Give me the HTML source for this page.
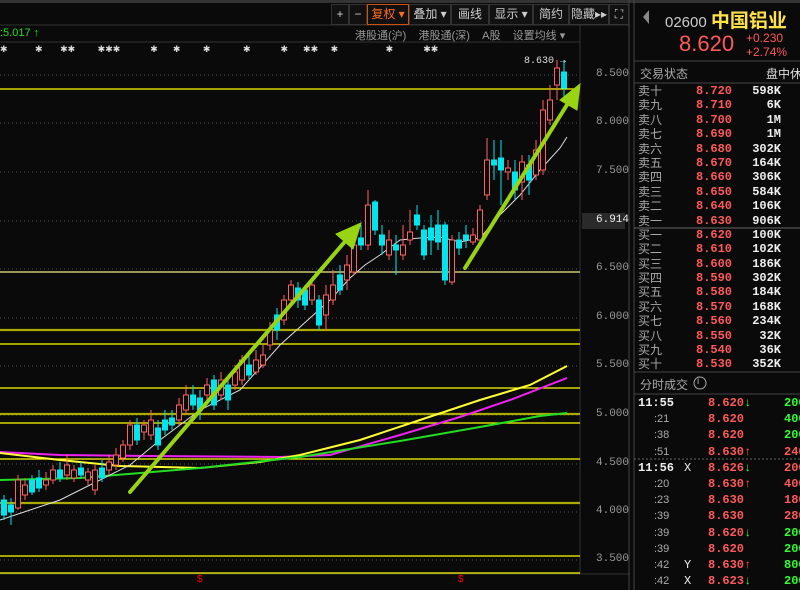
<!DOCTYPE html>
<html><head><meta charset="utf-8"><style>
body{margin:0;width:800px;height:590px;background:#0a0a0a;overflow:hidden;font-family:"Liberation Sans","Noto Sans CJK SC",sans-serif;position:relative}
.a{position:absolute;white-space:nowrap}
.tb{position:absolute;top:4px;height:19px;border:1px solid #333;color:#ccc;font-size:12px;line-height:19px;text-align:center;background:#111}
.ob{position:absolute;left:638px;font-size:12px;line-height:14px;width:162px}
.ob span{position:absolute}
.g{color:#aaa}.r{color:#ff5a5a;font-family:"Liberation Mono",monospace;font-weight:bold}.w{color:#eee;font-family:"Liberation Mono",monospace;font-weight:bold}
.gr{color:#3f3;font-family:"Liberation Mono",monospace;font-weight:bold}
.ax{position:absolute;left:596px;color:#999;font-size:11px;font-family:"Liberation Mono",monospace}
</style></head><body>
<svg width="800" height="590" style="position:absolute;left:0;top:0">
<rect x="0" y="0" width="800" height="3" fill="#333"/>
<line x1="0" y1="25" x2="630" y2="25" stroke="#333"/>
<line x1="0" y1="42" x2="580" y2="42" stroke="#333"/>
<line x1="580" y1="25" x2="580" y2="574" stroke="#333"/>
<line x1="629" y1="0" x2="629" y2="590" stroke="#444"/>
<line x1="634" y1="0" x2="634" y2="590" stroke="#444"/>
<line x1="0" y1="574" x2="630" y2="574" stroke="#333"/>
<g stroke="#555" stroke-dasharray="1,3">
<line x1="0" y1="75" x2="580" y2="75"/><line x1="0" y1="123" x2="580" y2="123"/><line x1="0" y1="172" x2="580" y2="172"/><line x1="0" y1="221" x2="580" y2="221"/><line x1="0" y1="269" x2="580" y2="269"/><line x1="0" y1="318" x2="580" y2="318"/><line x1="0" y1="366" x2="580" y2="366"/><line x1="0" y1="415" x2="580" y2="415"/><line x1="0" y1="464" x2="580" y2="464"/><line x1="0" y1="512" x2="580" y2="512"/><line x1="0" y1="560" x2="580" y2="560"/>
</g>
<g stroke="#ffff00" stroke-width="1.2">
<line x1="0" y1="89" x2="580" y2="89"/><line x1="0" y1="272" x2="580" y2="272" stroke="#eeee88"/><line x1="0" y1="344" x2="580" y2="344"/><line x1="0" y1="388" x2="580" y2="388"/><line x1="0" y1="423" x2="580" y2="423"/><line x1="0" y1="459" x2="580" y2="459"/><line x1="0" y1="556" x2="580" y2="556"/><line x1="0" y1="573" x2="580" y2="573"/>
</g>
<g stroke="#aaaa00" stroke-width="2.2">
<line x1="0" y1="330" x2="580" y2="330"/><line x1="0" y1="414" x2="580" y2="414"/><line x1="0" y1="503" x2="580" y2="503"/>
</g>
<polyline fill="none" stroke="#ee22ee" stroke-width="2" points="0,452 60,455 150,456 280,457 330,455 400,435 460,417 510,400 567,378"/>
<polyline fill="none" stroke="#ffff33" stroke-width="2" points="0,453 60,460 120,466 200,468 260,462 300,455 360,440 420,420 480,400 530,385 567,366"/>
<polyline fill="none" stroke="#22dd22" stroke-width="2" points="0,480 80,478 200,468 300,457 400,441 480,427 540,416 567,413"/>
<polyline fill="none" stroke="#ddd" stroke-width="1" points="0,520 30,510 60,500 100,480 130,465 160,440 200,410 240,390 280,345 310,318 330,300 350,278 365,265 380,255 400,240 420,238 440,237 460,242 480,238 500,215 520,195 540,170 560,148 567,137"/>
<g stroke-width="1">
<g stroke="#ff6060" fill="#0a0a0a">
<path d="M18 475V510M25 478V500M46 472V490M53 465V484M67 455V480M74 465V482M88 468V485M95 465V495M109 455V475M116 448V470M123 440V462M130 420V450M144 420V440M151 410V440M179 398V425M186 385V415M207 378V400M221 372V400M235 365V390M242 355V385M256 350V375M263 345V368M270 322V350M284 295V325M291 280V305M312 280V305M326 285V330M333 270V305M347 255V290M354 240V275M368 190V250M389 230V260M403 225V260M410 210V245M452 235V285M473 228V245M480 205V245M487 138V200M508 160V180M522 155V200M536 140V180M543 100V175M550 85V125M557 60V100"/>
<rect x="15.5" y="480" width="5" height="28"/><rect x="22.5" y="485" width="5" height="10"/><rect x="43.5" y="480" width="5" height="5"/><rect x="50.5" y="470" width="5" height="10"/><rect x="64.5" y="465" width="5" height="10"/><rect x="71.5" y="470" width="5" height="8"/><rect x="85.5" y="472" width="5" height="8"/><rect x="92.5" y="470" width="5" height="20"/><rect x="106.5" y="462" width="5" height="8"/><rect x="113.5" y="455" width="5" height="10"/><rect x="120.5" y="445" width="5" height="13"/><rect x="127.5" y="425" width="5" height="20"/><rect x="141.5" y="425" width="5" height="7"/><rect x="148.5" y="420" width="5" height="15"/><rect x="176.5" y="405" width="5" height="15"/><rect x="183.5" y="395" width="5" height="15"/><rect x="204.5" y="385" width="5" height="10"/><rect x="218.5" y="380" width="5" height="15"/><rect x="232.5" y="372" width="5" height="13"/><rect x="239.5" y="360" width="5" height="20"/><rect x="253.5" y="360" width="5" height="12"/><rect x="260.5" y="355" width="5" height="10"/><rect x="267.5" y="330" width="5" height="15"/><rect x="281.5" y="300" width="5" height="20"/><rect x="288.5" y="285" width="5" height="15"/><rect x="309.5" y="285" width="5" height="15"/><rect x="323.5" y="295" width="5" height="20"/><rect x="330.5" y="285" width="5" height="15"/><rect x="344.5" y="265" width="5" height="15"/><rect x="351.5" y="245" width="5" height="27"/><rect x="365.5" y="205" width="5" height="40"/><rect x="386.5" y="240" width="5" height="15"/><rect x="400.5" y="245" width="5" height="10"/><rect x="407.5" y="232" width="5" height="8"/><rect x="449.5" y="240" width="5" height="42"/><rect x="470.5" y="235" width="5" height="7"/><rect x="477.5" y="210" width="5" height="30"/><rect x="484.5" y="160" width="5" height="35"/><rect x="505.5" y="168" width="5" height="4"/><rect x="519.5" y="162" width="5" height="20"/><rect x="533.5" y="150" width="5" height="25"/><rect x="540.5" y="110" width="5" height="60"/><rect x="547.5" y="100" width="5" height="20"/><rect x="554.5" y="68" width="5" height="17"/>
</g>
<g stroke="#00e5ee" fill="#00e5ee">
<path d="M4 495V520M11 498V525M32 475V495M39 470V492M60 462V482M81 462V478M102 460V482M137 418V445M158 420V450M165 410V435M172 410V430M193 385V410M200 390V420M214 375V410M228 380V410M249 355V380M277 308V340M298 282V308M305 285V310M319 295V330M340 265V295M361 225V250M375 200V235M382 225V255M396 235V275M417 205V230M424 225V260M431 215V255M438 210V250M445 222V285M459 232V255M466 225V248M494 140V180M501 140V205M515 160V200M529 155V195M564 60V100"/>
<rect x="1.5" y="500" width="5" height="15"/><rect x="8.5" y="505" width="5" height="7"/><rect x="29.5" y="480" width="5" height="12"/><rect x="36.5" y="478" width="5" height="10"/><rect x="57.5" y="470" width="5" height="8"/><rect x="78.5" y="468" width="5" height="7"/><rect x="99.5" y="468" width="5" height="10"/><rect x="134.5" y="425" width="5" height="15"/><rect x="155.5" y="428" width="5" height="17"/><rect x="162.5" y="420" width="5" height="10"/><rect x="169.5" y="418" width="5" height="7"/><rect x="190.5" y="395" width="5" height="10"/><rect x="197.5" y="398" width="5" height="12"/><rect x="211.5" y="380" width="5" height="25"/><rect x="225.5" y="385" width="5" height="15"/><rect x="246.5" y="365" width="5" height="10"/><rect x="274.5" y="315" width="5" height="15"/><rect x="295.5" y="288" width="5" height="12"/><rect x="302.5" y="290" width="5" height="15"/><rect x="316.5" y="300" width="5" height="25"/><rect x="337.5" y="275" width="5" height="15"/><rect x="358.5" y="238" width="5" height="7"/><rect x="372.5" y="202" width="5" height="28"/><rect x="379.5" y="235" width="5" height="10"/><rect x="393.5" y="245" width="5" height="5"/><rect x="414.5" y="215" width="5" height="10"/><rect x="421.5" y="230" width="5" height="25"/><rect x="428.5" y="228" width="5" height="12"/><rect x="435.5" y="225" width="5" height="17"/><rect x="442.5" y="225" width="5" height="55"/><rect x="456.5" y="240" width="5" height="8"/><rect x="463.5" y="235" width="5" height="5"/><rect x="491.5" y="160" width="5" height="5"/><rect x="498.5" y="158" width="5" height="12"/><rect x="512.5" y="172" width="5" height="18"/><rect x="526.5" y="165" width="5" height="15"/><rect x="561.5" y="72" width="5" height="16"/>
</g>
</g>
<g fill="#99d414" stroke="#99d414" stroke-linecap="round">
<line x1="130" y1="492" x2="348" y2="238" stroke-width="4"/>
<polygon points="361,223 336,234 353,249"/>
<line x1="465" y1="268" x2="570" y2="100" stroke-width="4"/>
<polygon points="580,84 560,100 577,110"/>
</g>
<rect x="582" y="213" width="43" height="16" fill="#2a2a2a"/>
<line x1="634" y1="61" x2="800" y2="61" stroke="#444"/>
<line x1="634" y1="83" x2="800" y2="83" stroke="#444"/>
<line x1="634" y1="228" x2="800" y2="228" stroke="#666"/>
<line x1="634" y1="372" x2="800" y2="372" stroke="#444"/>
<line x1="634" y1="394" x2="800" y2="394" stroke="#444"/>
<line x1="634" y1="459" x2="800" y2="459" stroke="#666" stroke-dasharray="2,2"/>
<polygon points="649,10 649,24 643,17" fill="#888"/>
<circle cx="700" cy="383" r="6" fill="none" stroke="#aaa"/>
</svg>
<div class="tb" style="left:331px;width:16px">+</div><div class="tb" style="left:349px;width:16px">−</div>
<div class="tb" style="left:367px;width:40px;border-color:#d05010;color:#ff6a20">复权 ▾</div>
<div class="tb" style="left:409px;width:40px">叠加 ▾</div><div class="tb" style="left:451px;width:36px">画线</div>
<div class="tb" style="left:489px;width:42px">显示 ▾</div><div class="tb" style="left:533px;width:34px">简约</div>
<div class="tb" style="left:569px;width:38px">隐藏▸▸</div><div class="tb" style="left:609px;width:18px">⛶</div>
<div class="a" style="left:0;top:27px;color:#2d2;font-size:11px">:5.017 <b>↑</b></div>
<div class="a" style="left:355px;top:27px;color:#999;font-size:11px">港股通(沪) &nbsp;&nbsp; 港股通(深) &nbsp;&nbsp; A股 &nbsp;&nbsp; 设置均线 ▾</div>
<div class="a" style="left:0;top:44px;color:#ddd;font-size:9px;letter-spacing:0">✱&nbsp;&nbsp;&nbsp;&nbsp;&nbsp;&nbsp;&nbsp;&nbsp;&nbsp;&nbsp;&nbsp;✱&nbsp;&nbsp;&nbsp;&nbsp;&nbsp;&nbsp;&nbsp;✱✱&nbsp;&nbsp;&nbsp;&nbsp;&nbsp;&nbsp;&nbsp;&nbsp;&nbsp;✱✱✱&nbsp;&nbsp;&nbsp;&nbsp;&nbsp;&nbsp;&nbsp;&nbsp;&nbsp;&nbsp;&nbsp;&nbsp;✱&nbsp;&nbsp;&nbsp;&nbsp;&nbsp;&nbsp;✱&nbsp;&nbsp;&nbsp;&nbsp;&nbsp;&nbsp;&nbsp;&nbsp;&nbsp;✱&nbsp;&nbsp;&nbsp;&nbsp;&nbsp;&nbsp;&nbsp;&nbsp;&nbsp;&nbsp;&nbsp;&nbsp;&nbsp;✱&nbsp;&nbsp;&nbsp;&nbsp;&nbsp;&nbsp;&nbsp;&nbsp;&nbsp;&nbsp;&nbsp;&nbsp;✱&nbsp;&nbsp;&nbsp;&nbsp;&nbsp;&nbsp;✱✱&nbsp;&nbsp;&nbsp;&nbsp;&nbsp;✱&nbsp;&nbsp;&nbsp;&nbsp;&nbsp;&nbsp;&nbsp;&nbsp;&nbsp;&nbsp;&nbsp;&nbsp;&nbsp;&nbsp;&nbsp;&nbsp;&nbsp;&nbsp;&nbsp;✱&nbsp;&nbsp;&nbsp;&nbsp;&nbsp;&nbsp;&nbsp;&nbsp;&nbsp;&nbsp;&nbsp;&nbsp;✱✱</div>
<div class="a" style="left:524px;top:56px;color:#ddd;font-size:10px;font-family:'Liberation Mono',monospace">8.630 →</div>
<div class="a" style="left:197px;top:574px;color:#f00;font-size:10px">$</div><div class="a" style="left:458px;top:574px;color:#f00;font-size:10px">$</div>
<div class="ax" style="top:68px">8.500</div><div class="ax" style="top:116px">8.000</div><div class="ax" style="top:165px">7.500</div>
<div class="ax" style="top:214px;color:#eee">6.914</div><div class="ax" style="top:262px">6.500</div><div class="ax" style="top:311px">6.000</div>
<div class="ax" style="top:359px">5.500</div><div class="ax" style="top:408px">5.000</div><div class="ax" style="top:457px">4.500</div>
<div class="ax" style="top:505px">4.000</div><div class="ax" style="top:553px">3.500</div>
<div class="a" style="left:665px;top:6px;color:#ccc;font-size:15px">02600 <span style="color:#ffe14a;font-size:19px;font-weight:bold">中国铝业</span></div>
<div class="a" style="left:679px;top:31px;color:#ff5a5a;font-size:22px">8.620</div>
<div class="a" style="left:746px;top:31px;color:#ff5a5a;font-size:12px;line-height:14px">+0.230<br>+2.74%</div>
<div class="a" style="left:640px;top:65px;color:#aaa;font-size:12px">交易状态</div><div class="a" style="left:766px;top:65px;color:#ddd;font-size:12px">盘中休</div>
<div class="ob" style="top:84px">
<div style="position:relative;height:14.4px"><span class="g">卖十</span><span class="r" style="left:58px">8.720</span><span class="w" style="right:19px">598K</span></div>
<div style="position:relative;height:14.4px"><span class="g">卖九</span><span class="r" style="left:58px">8.710</span><span class="w" style="right:19px">6K</span></div>
<div style="position:relative;height:14.4px"><span class="g">卖八</span><span class="r" style="left:58px">8.700</span><span class="w" style="right:19px">1M</span></div>
<div style="position:relative;height:14.4px"><span class="g">卖七</span><span class="r" style="left:58px">8.690</span><span class="w" style="right:19px">1M</span></div>
<div style="position:relative;height:14.4px"><span class="g">卖六</span><span class="r" style="left:58px">8.680</span><span class="w" style="right:19px">302K</span></div>
<div style="position:relative;height:14.4px"><span class="g">卖五</span><span class="r" style="left:58px">8.670</span><span class="w" style="right:19px">164K</span></div>
<div style="position:relative;height:14.4px"><span class="g">卖四</span><span class="r" style="left:58px">8.660</span><span class="w" style="right:19px">306K</span></div>
<div style="position:relative;height:14.4px"><span class="g">卖三</span><span class="r" style="left:58px">8.650</span><span class="w" style="right:19px">584K</span></div>
<div style="position:relative;height:14.4px"><span class="g">卖二</span><span class="r" style="left:58px">8.640</span><span class="w" style="right:19px">106K</span></div>
<div style="position:relative;height:14.4px"><span class="g">卖一</span><span class="r" style="left:58px">8.630</span><span class="w" style="right:19px">906K</span></div>
<div style="position:relative;height:14.4px"><span class="g">买一</span><span class="r" style="left:58px">8.620</span><span class="w" style="right:19px">100K</span></div>
<div style="position:relative;height:14.4px"><span class="g">买二</span><span class="r" style="left:58px">8.610</span><span class="w" style="right:19px">102K</span></div>
<div style="position:relative;height:14.4px"><span class="g">买三</span><span class="r" style="left:58px">8.600</span><span class="w" style="right:19px">186K</span></div>
<div style="position:relative;height:14.4px"><span class="g">买四</span><span class="r" style="left:58px">8.590</span><span class="w" style="right:19px">302K</span></div>
<div style="position:relative;height:14.4px"><span class="g">买五</span><span class="r" style="left:58px">8.580</span><span class="w" style="right:19px">184K</span></div>
<div style="position:relative;height:14.4px"><span class="g">买六</span><span class="r" style="left:58px">8.570</span><span class="w" style="right:19px">168K</span></div>
<div style="position:relative;height:14.4px"><span class="g">买七</span><span class="r" style="left:58px">8.560</span><span class="w" style="right:19px">234K</span></div>
<div style="position:relative;height:14.4px"><span class="g">买八</span><span class="r" style="left:58px">8.550</span><span class="w" style="right:19px">32K</span></div>
<div style="position:relative;height:14.4px"><span class="g">买九</span><span class="r" style="left:58px">8.540</span><span class="w" style="right:19px">36K</span></div>
<div style="position:relative;height:14.4px"><span class="g">买十</span><span class="r" style="left:58px">8.530</span><span class="w" style="right:19px">352K</span></div>
</div>
<div class="a" style="left:640px;top:376px;color:#aaa;font-size:12px">分时成交</div><div class="a" style="left:697px;top:376px;color:#aaa;font-size:10px">i</div>
<div class="ob" style="top:396px;font-size:12px">
<div style="position:relative;height:16.2px"><span class="w">11:55</span><span class="r" style="left:70px">8.620<span style="color:#3f3">↓</span></span><span class="gr" style="left:146px">2000</span></div>
<div style="position:relative;height:16.2px"><span class="g" style="left:16px;font-size:11px">:21</span><span class="r" style="left:70px">8.620</span><span class="gr" style="left:146px">400</span></div>
<div style="position:relative;height:16.2px"><span class="g" style="left:16px;font-size:11px">:38</span><span class="r" style="left:70px">8.620</span><span class="gr" style="left:146px">200</span></div>
<div style="position:relative;height:16.2px"><span class="g" style="left:16px;font-size:11px">:51</span><span class="r" style="left:70px">8.630↑</span><span class="r" style="left:146px">2400</span></div>
<div style="position:relative;height:16.2px"><span class="w">11:56</span><span class="w" style="left:46px;font-weight:normal">X</span><span class="r" style="left:70px">8.626<span style="color:#3f3">↓</span></span><span class="r" style="left:146px">200</span></div>
<div style="position:relative;height:16.2px"><span class="g" style="left:16px;font-size:11px">:20</span><span class="r" style="left:70px">8.630↑</span><span class="r" style="left:146px">400</span></div>
<div style="position:relative;height:16.2px"><span class="g" style="left:16px;font-size:11px">:23</span><span class="r" style="left:70px">8.630</span><span class="r" style="left:146px">1800</span></div>
<div style="position:relative;height:16.2px"><span class="g" style="left:16px;font-size:11px">:39</span><span class="r" style="left:70px">8.630</span><span class="r" style="left:146px">2800</span></div>
<div style="position:relative;height:16.2px"><span class="g" style="left:16px;font-size:11px">:39</span><span class="r" style="left:70px">8.620<span style="color:#3f3">↓</span></span><span class="gr" style="left:146px">200</span></div>
<div style="position:relative;height:16.2px"><span class="g" style="left:16px;font-size:11px">:39</span><span class="r" style="left:70px">8.620</span><span class="gr" style="left:146px">200</span></div>
<div style="position:relative;height:16.2px"><span class="g" style="left:16px;font-size:11px">:42</span><span class="w" style="left:46px;font-weight:normal">Y</span><span class="r" style="left:70px">8.630↑</span><span class="gr" style="left:146px">800</span></div>
<div style="position:relative;height:16.2px"><span class="g" style="left:16px;font-size:11px">:42</span><span class="w" style="left:46px;font-weight:normal">X</span><span class="r" style="left:70px">8.623<span style="color:#3f3">↓</span></span><span class="gr" style="left:146px">200</span></div>
</div>
</body></html>
